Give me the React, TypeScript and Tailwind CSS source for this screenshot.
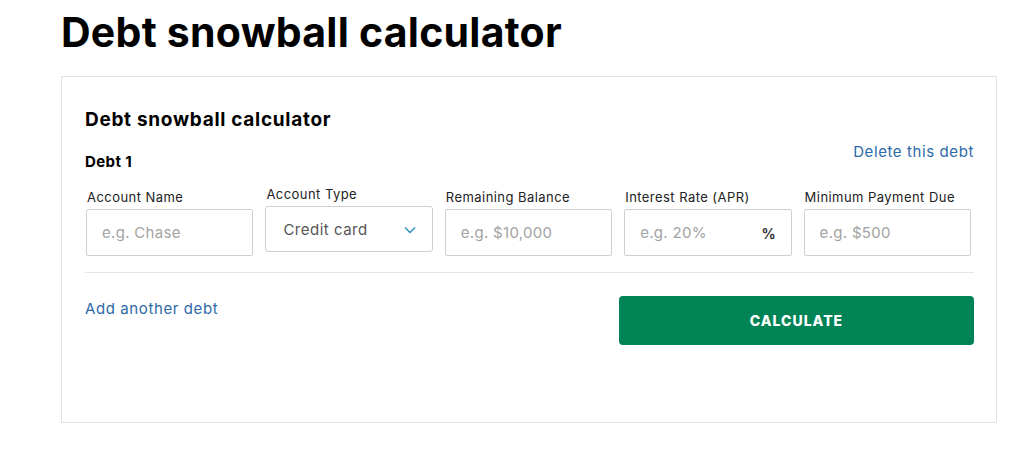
import React from 'react';

const fields = [
  { label: 'Account Name', placeholder: 'e.g. Chase' },
  { label: 'Account Type', select: 'Credit card' },
  { label: 'Remaining Balance', placeholder: 'e.g. $10,000' },
  { label: 'Interest Rate (APR)', placeholder: 'e.g. 20%', suffix: '%' },
  { label: 'Minimum Payment Due', placeholder: 'e.g. $500' },
];

const App = () => {
  return (
    <div className="w-[1024px] h-[449px] bg-white overflow-hidden font-['Inter','Liberation_Sans',sans-serif]">
      <div className="pl-[61px] pr-[27px] pt-[6px]">
        <h1 className="text-[41px] leading-[52px] font-bold text-black tracking-[0.25px]">
          Debt snowball calculator
        </h1>

        {/* Calculator card */}
        <div className="mt-[18px] border border-[#e3e3e3] h-[347px] pl-[23px] pr-[22px] pt-[30px]">
          <h2 className="text-[19px] leading-[26px] font-bold text-black tracking-[0.7px]">Debt snowball calculator</h2>

          <div className="flex justify-between items-start mt-[9px]">
            <div className="text-[15px] font-bold text-black pt-[10px] leading-[20px] tracking-[0.4px]">Debt 1</div>
            <a className="text-[15px] leading-[20px] text-[#2d6aa8] tracking-[0.6px]">Delete this debt</a>
          </div>

          <div className="grid grid-cols-5 gap-x-[12px] mt-[16px] pl-[1px] pr-[3px]">
            {fields.map((f, i) => (
              <div key={i} className={f.select ? '-mt-[3px]' : ''}>
                <div className="text-[13px] leading-[18px] text-[#222] pl-[1px] mb-[3px] tracking-[0.45px]">{f.label}</div>
                {f.select ? (
                  <div className="h-[46px] border border-[#cfcfcf] rounded-[3px] flex items-center justify-between pl-[17px] pr-[16px] pt-[2px]">
                    <span className="text-[15px] text-[#555] tracking-[0.5px]">{f.select}</span>
                    <svg width="12" height="8" viewBox="0 0 12 8" fill="none">
                      <path d="M1 1.5l5 5 5-5" stroke="#2a8fb8" strokeWidth="1.4" />
                    </svg>
                  </div>
                ) : (
                  <div className="h-[47px] border border-[#cfcfcf] rounded-[2px] flex items-center justify-between pl-[15px] pr-[15px] pt-[1px]">
                    <span className="text-[15px] text-[#a3a3a3] tracking-[0.3px]">{f.placeholder}</span>
                    {f.suffix && <span className="text-[14px] font-bold text-[#333]">{f.suffix}</span>}
                  </div>
                )}
              </div>
            ))}
          </div>

          <div className="border-t border-[#e5e5e5] mt-[16px]" />

          <div className="flex justify-between items-start mt-[23px]">
            <a className="text-[15px] leading-[20px] text-[#2d6aa8] mt-[3px] tracking-[0.6px]">Add another debt</a>
            <button className="w-[355px] h-[49px] bg-[#008456] rounded-[4px] text-white text-[14px] font-extrabold tracking-[1px]">
              CALCULATE
            </button>
          </div>
        </div>
      </div>
    </div>
  );
};

export default App;
